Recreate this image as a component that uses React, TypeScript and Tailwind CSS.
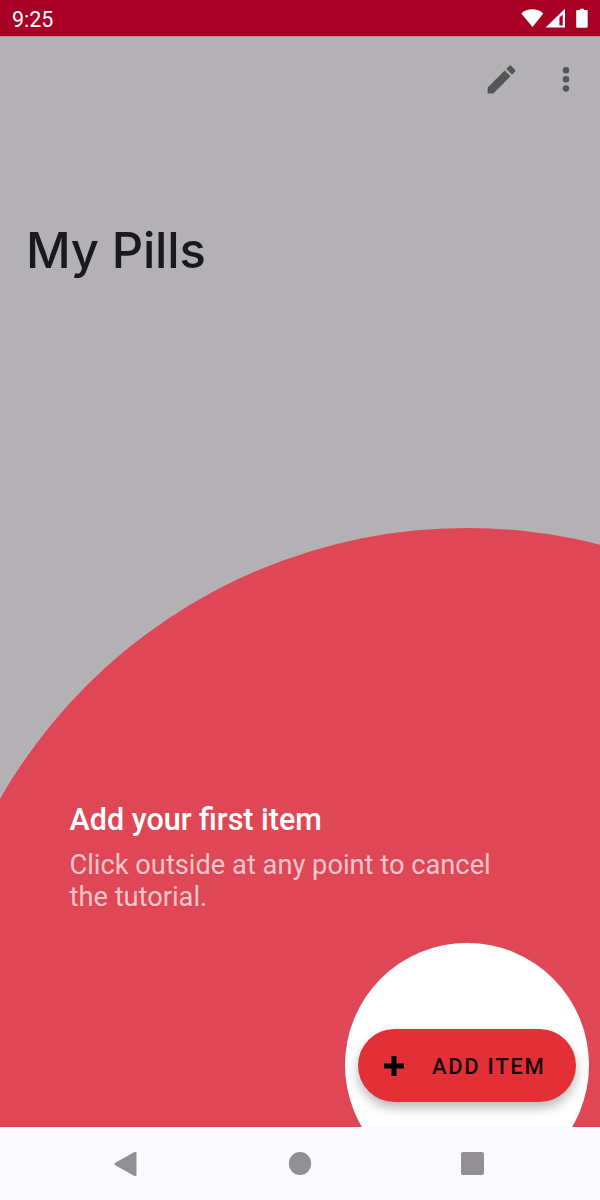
function StatusBar() {
  return (
    <header className="flex h-[37px] shrink-0 items-start justify-between border-b border-[#c98a97] bg-[#a80024] pt-[7px] pr-[12px] pl-[12px] text-white">
      <span className="text-[21.5px] leading-[25px]">9:25</span>
      <svg className="mt-[1px] h-[20px] w-[68px]" viewBox="0 0 68 20" fill="currentColor">
        <path d="M1.3 5.4C7-.2 17.6-.2 23.3 5.4L12.5 19Z" />
        <path fillRule="evenodd" d="M25.5 19.6 45 0.8V19.6ZM39.4 9.6V17.6H42.7V6.6Z" />
        <path d="M57.5 2H60V0.7h4V2h2.7q1 0 1 1V18.7q0 1-1 1H57.2q-1 0-1-1V3q0-1 1.3-1Z" />
      </svg>
    </header>
  );
}

function Toolbar() {
  return (
    <div className="flex h-[84px] items-center justify-end gap-[28px] pr-[16px] text-[#555557]">
      <button aria-label="Edit">
        <svg className="h-[37px] w-[37px]" viewBox="0 0 24 24" fill="currentColor">
          <path d="M3 17.25V21h3.75L17.81 9.94l-3.75-3.75L3 17.25zM20.71 7.04c.39-.39.39-1.02 0-1.41l-2.34-2.34c-.39-.39-1.02-.39-1.41 0l-1.83 1.83 3.75 3.75 1.83-1.83z" />
        </svg>
      </button>
      <button aria-label="More options">
        <svg className="h-[36px] w-[36px]" viewBox="0 0 24 24" fill="currentColor">
          <circle cx="12" cy="6.1" r="2.15" />
          <circle cx="12" cy="12.2" r="2.15" />
          <circle cx="12" cy="18.3" r="2.15" />
        </svg>
      </button>
    </div>
  );
}

function NavigationBar() {
  return (
    <nav className="flex h-[73px] shrink-0 items-center justify-between bg-[#faf9fc] pr-[116px] pl-[114px] text-[#918f92]">
      <svg className="h-[26px] w-[23px]" viewBox="0 0 23 26" fill="currentColor">
        <path d="M1.2 11.8 20.5 1q2-.8 2 1.2V23.8q0 2-2 1.2L1.2 14.2q-1.6-1.2 0-2.4Z" />
      </svg>
      <span className="ml-[2px] h-[22.5px] w-[22.5px] rounded-full bg-[#918f92]" />
      <span className="h-[23px] w-[23px] rounded-[2px] bg-[#918f92]" />
    </nav>
  );
}

export default function App() {
  return (
    <div className="flex h-[1200px] w-[600px] flex-col overflow-hidden bg-[#b3b1b4] font-['Roboto',sans-serif]">
      <StatusBar />
      <main className="relative flex flex-1 flex-col overflow-hidden">
        <div className="absolute top-[490.5px] left-[-71px] h-[1076px] w-[1076px] rounded-full bg-[#df4756]" />
        <div className="absolute top-[906px] left-[345px] h-[244px] w-[244px] rounded-full bg-white" />
        <Toolbar />
        <h1 className="mt-[98px] ml-[26px] flex h-[64px] items-center font-['Inter',sans-serif] text-[49px] leading-[64px] font-[550] tracking-[-0.2px] text-[#1a191b]">
          My Pills
        </h1>
        <section className="relative mt-[519px] ml-[69.5px] h-[118px]">
          <h2 className="text-[30.5px] leading-[36px] font-medium whitespace-nowrap text-white">Add your first item</h2>
          <p className="mt-[11px] text-[27.25px] leading-[32px] whitespace-nowrap text-[#f7c5cc]">
            Click outside at any point to cancel
            <br />
            the tutorial.
          </p>
        </section>
        <button className="relative mt-auto mr-[24px] mb-[25px] flex h-[73px] w-[218px] items-center self-end rounded-full bg-[#e33036] pl-[26px] text-[22px] font-medium tracking-[1.7px] text-[#16050a] shadow-[0_6px_12px_rgba(0,0,0,0.28)]">
          <svg className="mr-[28px] h-[20px] w-[20px] text-black" viewBox="0 0 20 20" fill="currentColor">
            <path d="M7.5 0h5v7.5H20v5h-7.5V20h-5v-7.5H0v-5h7.5Z" />
          </svg>
          <span className="pt-[2px] whitespace-nowrap">ADD ITEM</span>
        </button>
      </main>
      <NavigationBar />
    </div>
  );
}
